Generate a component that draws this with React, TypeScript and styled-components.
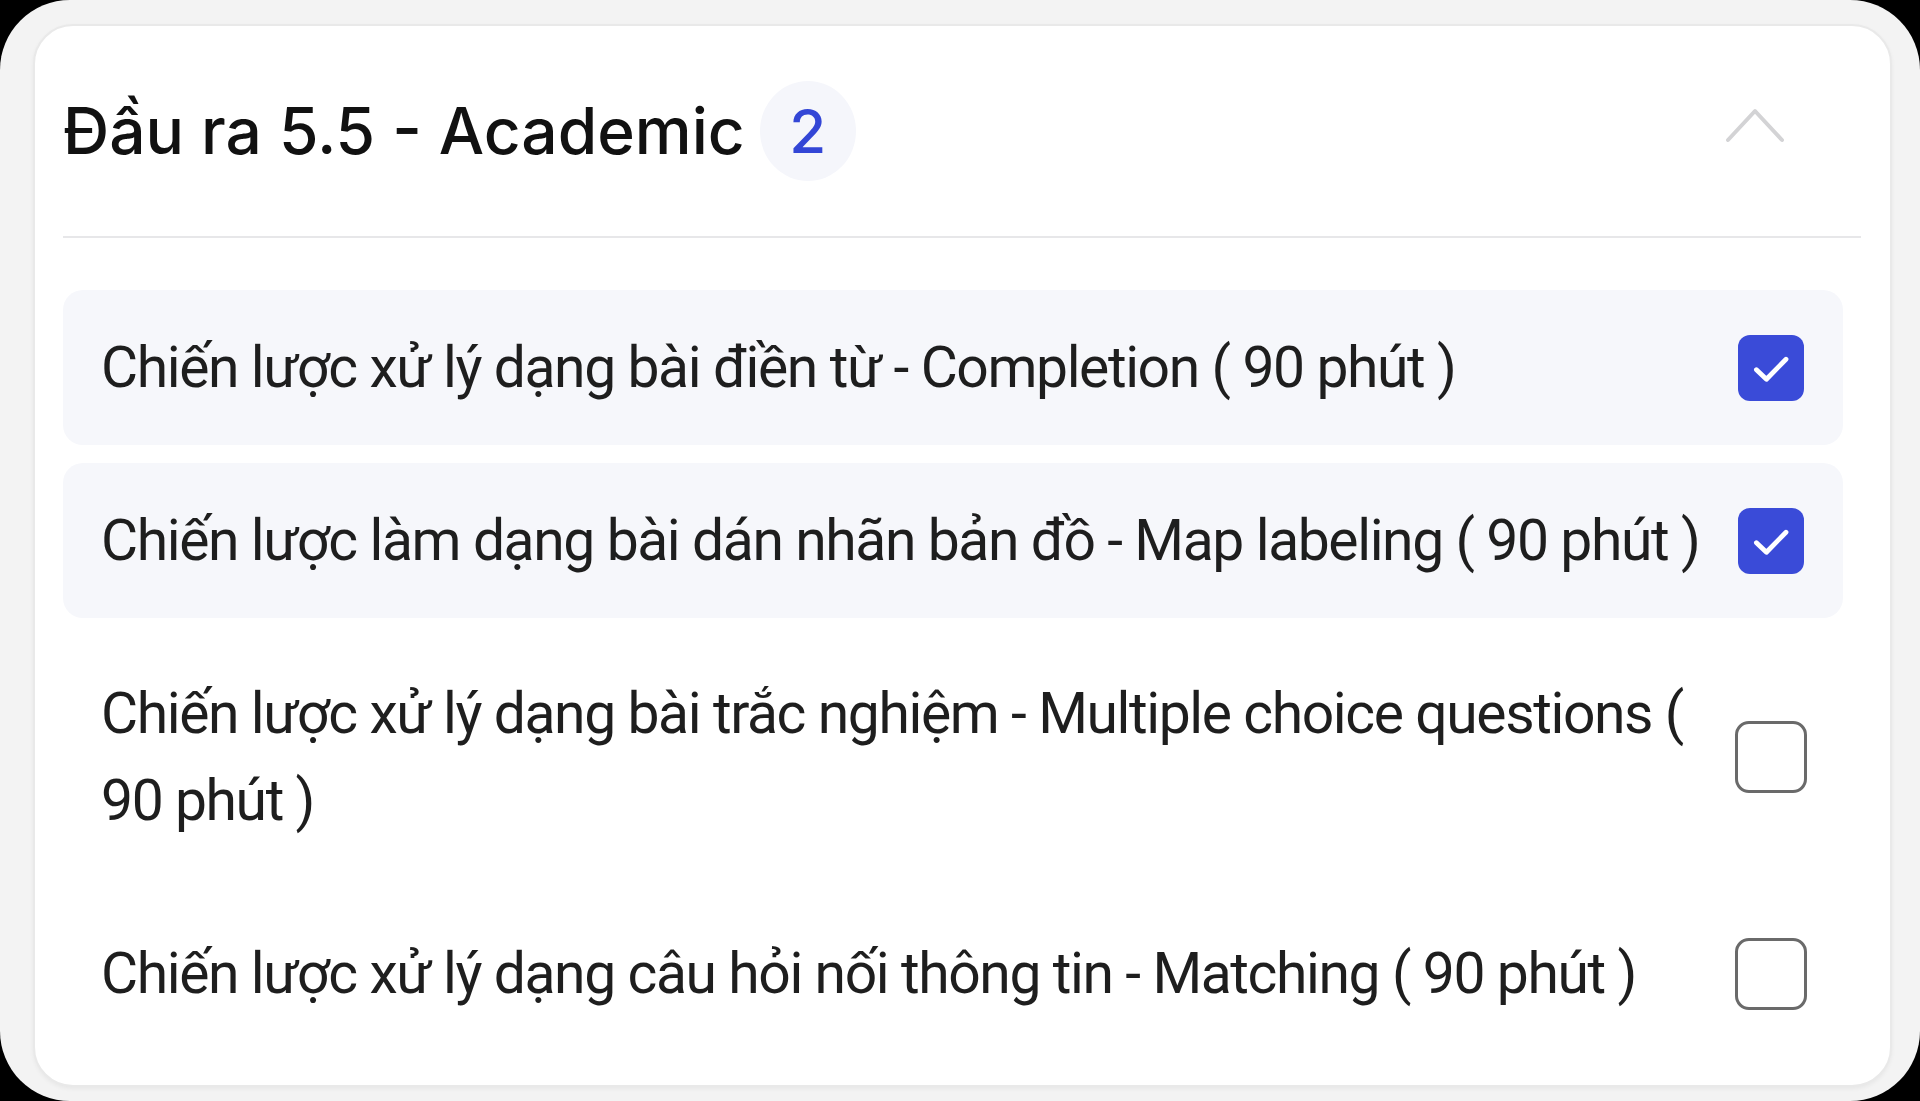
import React from "react";
import styled, { createGlobalStyle } from "styled-components";

const GlobalStyle = createGlobalStyle`
  html, body { margin: 0; padding: 0; background: #000; }
  body { font-family: "Roboto", "Liberation Sans", sans-serif; }
  * { box-sizing: border-box; }
`;

const Frame = styled.div`
  width: 1920px;
  height: 1101px;
  background: #f3f3f3;
  border-radius: 70px;
  display: flex;
  padding: 24px 28px 14px 33px;
`;

const Card = styled.section`
  flex: 1;
  background: #fff;
  border: 2px solid #e9e9e9;
  border-radius: 40px;
  box-shadow: 0 2px 4px rgba(0, 0, 0, 0.05);
  padding: 0 29px 0 28px;
  display: flex;
  flex-direction: column;
  overflow: hidden;
`;

const Header = styled.header`
  height: 210px;
  display: flex;
  align-items: center;
  gap: 15px;
  flex-shrink: 0;
`;

const Title = styled.h2`
  margin: 0;
  font-family: "Inter", "Liberation Sans", sans-serif;
  font-weight: 500;
  font-size: 64px;
  letter-spacing: 0px;
  color: #111;
  line-height: 1;
`;

const Badge = styled.span`
  width: 96px;
  height: 100px;
  border-radius: 50%;
  background: #f5f6fb;
  display: flex;
  align-items: center;
  justify-content: center;
  font-family: "Inter", "Liberation Sans", sans-serif;
  font-weight: 500;
  font-size: 60px;
  color: #3346d6;
  line-height: 1;
`;

const Toggle = styled.button`
  margin-left: auto;
  margin-right: 76px;
  margin-bottom: 12px;
  background: none;
  border: none;
  padding: 0;
  display: flex;
  cursor: pointer;
`;

const Divider = styled.hr`
  margin: 0;
  border: none;
  height: 2px;
  background: #e7e7e9;
  flex-shrink: 0;
`;

const List = styled.ul`
  list-style: none;
  margin: 52px 18px 0 0;
  padding: 0;
  display: flex;
  flex-direction: column;
  gap: 18px;
`;

const Row = styled.li<{ $active: boolean }>`
  display: flex;
  align-items: center;
  gap: 30px;
  padding: 34px 36px 34px 38px;
  border-radius: 20px;
  background: ${(p) => (p.$active ? "#f6f7fb" : "transparent")};
`;

const Label = styled.span`
  flex: 1;
  font-family: "Roboto", "Liberation Sans", sans-serif;
  font-size: 57px;
  line-height: 87px;
  color: #1e1e1e;
  letter-spacing: -1.4px;
`;

const BoxSlot = styled.span`
  width: 72px;
  height: 72px;
  flex-shrink: 0;
  display: flex;
  align-items: center;
  justify-content: center;
`;

const Box = styled.span<{ $checked: boolean }>`
  display: flex;
  align-items: center;
  justify-content: center;
  width: ${(p) => (p.$checked ? "66px" : "72px")};
  height: ${(p) => (p.$checked ? "66px" : "72px")};
  border-radius: ${(p) => (p.$checked ? "12px" : "14px")};
  background: ${(p) => (p.$checked ? "#3a4bd8" : "#fff")};
  border: ${(p) => (p.$checked ? "none" : "3px solid #6a6a6a")};
`;

const items = [
  { text: "Chiến lược xử lý dạng bài điền từ - Completion ( 90 phút )", checked: true },
  { text: "Chiến lược làm dạng bài dán nhãn bản đồ - Map labeling ( 90 phút )", checked: true },
  { text: "Chiến lược xử lý dạng bài trắc nghiệm - Multiple choice questions ( 90 phút )", checked: false },
  { text: "Chiến lược xử lý dạng câu hỏi nối thông tin - Matching ( 90 phút )", checked: false },
];

export default function App() {
  return (
    <>
      <GlobalStyle />
      <Frame>
        <Card>
          <Header>
            <Title>Đầu ra 5.5 - Academic</Title>
            <Badge>2</Badge>
            <Toggle aria-label="Thu gọn">
              <svg width="60" height="36" viewBox="0 0 60 36" fill="none">
                <path d="M3 33 L30 4 L57 33" stroke="#d3d3d5" strokeWidth="4" strokeLinecap="round" strokeLinejoin="round" />
              </svg>
            </Toggle>
          </Header>
          <Divider />
          <List>
            {items.map((it) => (
              <Row key={it.text} $active={it.checked}>
                <Label>{it.text}</Label>
                <BoxSlot>
                  <Box $checked={it.checked}>
                    {it.checked && (
                      <svg width="50" height="50" viewBox="0 0 24 24" fill="none">
                        <path d="M5 12.8 L9.8 17.4 L19.2 7.8" stroke="#fff" strokeWidth="2.3" strokeLinecap="round" strokeLinejoin="round" />
                      </svg>
                    )}
                  </Box>
                </BoxSlot>
              </Row>
            ))}
          </List>
        </Card>
      </Frame>
    </>
  );
}
